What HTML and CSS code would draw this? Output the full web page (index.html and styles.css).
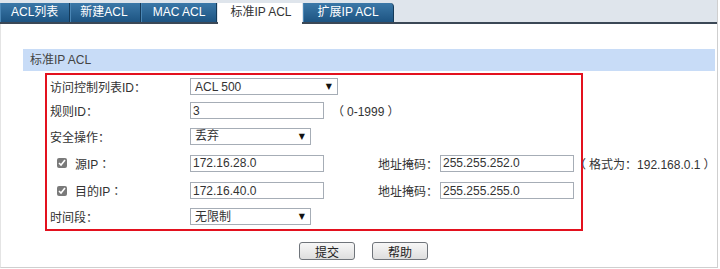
FILE: index.html
```html
<!DOCTYPE html>
<html lang="zh-CN">
<head>
    <meta charset="UTF-8">
    <meta name="viewport" content="width=device-width, initial-scale=1.0">
    <link rel="stylesheet" href="styles.css">
    <title>标准IP ACL</title>
</head>
<body>
    <div class="page">
        <ul class="tabs">
            <li class="tab">ACL列表</li>
            <li class="tab">新建ACL</li>
            <li class="tab">MAC ACL</li>
            <li class="tab active">标准IP ACL</li>
            <li class="tab">扩展IP ACL</li>
        </ul>

        <div class="content">
            <div class="panel-title">标准IP ACL</div>

            <form class="acl-form">
                <!-- ACL id -->
                <label class="label" for="aclId">访问控制列表ID<span class="punct">：</span></label>
                <div class="field span">
                    <span class="select-wrap">
                        <select id="aclId" class="select select-long">
                            <option>ACL 500</option>
                        </select>
                    </span>
                </div>

                <!-- rule id -->
                <label class="label" for="ruleId">规则ID<span class="punct">：</span></label>
                <div class="field span">
                    <input type="text" id="ruleId" class="text-input" value="3">
                    <span class="hint"><span class="punct open">（</span>0-1999<span class="punct close">）</span></span>
                </div>

                <!-- action -->
                <label class="label" for="action">安全操作<span class="punct">：</span></label>
                <div class="field span">
                    <span class="select-wrap">
                        <select id="action" class="select select-short">
                            <option>丢弃</option>
                        </select>
                    </span>
                </div>

                <!-- source ip -->
                <label class="label check" for="srcIp"><input type="checkbox" class="checkbox" checked>源IP<span class="punct">：</span></label>
                <div class="field">
                    <input type="text" id="srcIp" class="text-input" value="172.16.28.0">
                </div>
                <label class="mask-label" for="srcMask">地址掩码<span class="punct">：</span></label>
                <div class="field">
                    <input type="text" id="srcMask" class="text-input" value="255.255.252.0">
                </div>
                <span class="note"><span class="punct open">（</span>格式为<span class="punct">：</span>192.168.0.1<span class="punct close">）</span></span>

                <!-- destination ip -->
                <label class="label check" for="dstIp"><input type="checkbox" class="checkbox" checked>目的IP<span class="punct">：</span></label>
                <div class="field">
                    <input type="text" id="dstIp" class="text-input" value="172.16.40.0">
                </div>
                <label class="mask-label" for="dstMask">地址掩码<span class="punct">：</span></label>
                <div class="field span-rest">
                    <input type="text" id="dstMask" class="text-input" value="255.255.255.0">
                </div>

                <!-- time range -->
                <label class="label" for="timeRange">时间段<span class="punct">：</span></label>
                <div class="field span">
                    <span class="select-wrap">
                        <select id="timeRange" class="select select-short">
                            <option>无限制</option>
                        </select>
                    </span>
                </div>
            </form>

            <div class="actions">
                <button type="button" class="btn">提交</button>
                <button type="button" class="btn">帮助</button>
            </div>
        </div>
    </div>
</body>
</html>
```

FILE: styles.css
```css
body {
    margin: 0;
    padding: 0;
    background-color: #ffffff;
    font-family: "Liberation Sans", "Noto Sans CJK SC", Arial, sans-serif;
    font-size: 12px;
    color: #333333;
}

.page {
    width: 718px;
    height: 268px;
    box-sizing: border-box;
    border-left: 1px solid #e4e4e4;
    border-right: 1px solid #cfcfcf;
    border-bottom: 1px solid #cfcfcf;
    background-color: #ffffff;
}

/* Tab bar */
.tabs {
    display: flex;
    margin: 0 0 0 -1px;
    padding: 3px 0 0 0;
    list-style: none;
    background-color: #dfe5ec;
    border-bottom: 2px solid #3b4856;
}

.tab {
    height: 19px;
    line-height: 19px;
    padding: 0 11px;
    color: #ffffff;
    background: linear-gradient(#3b78a8, #1d5482);
    border-left: 1px solid #4a86b5;
    border-right: 1px solid #143a59;
    white-space: nowrap;
}

.tab:first-child {
    padding-left: 10px;
}

.tab:nth-child(2) {
    padding: 0 12px 0 9px;
}

.tab:last-child {
    padding: 0 14px;
    border-top-right-radius: 4px;
}

.tab.active {
    height: 21px;
    margin: 0 1px -2px 1px;
    padding: 0 10px 0 12px;
    color: #333333;
    background: #ffffff;
    border: 0;
}

/* Content */
.content {
    margin: 0 2px 0 22px;
    padding-top: 25px;
}

.panel-title {
    height: 22px;
    line-height: 22px;
    padding-left: 7px;
    background-color: #c8dcf7;
    color: #444444;
}

/* Form highlighted with red frame */
.acl-form {
    display: grid;
    grid-template-columns: 140px 188px 62px 133px minmax(0, 1fr);
    grid-template-rows: 23px 25px 26px 28px 27px 25px;
    align-items: center;
    width: 538px;
    height: 158px;
    box-sizing: border-box;
    margin: 2px 0 0 22px;
    padding-left: 3px;
    border: 2px solid #e3111e;
}

/* full-width punctuation centred in its box, like the original UI font */
.punct {
    font-family: "Noto Sans CJK TC", "Noto Sans CJK SC", sans-serif;
}

.punct.open {
    padding-right: 3px;
}

.punct.close {
    padding-left: 3px;
}

.label {
    white-space: nowrap;
}

.label.check {
    display: flex;
    align-items: center;
}

.checkbox {
    width: 10px;
    height: 10px;
    margin: 0 8px 0 7px;
    accent-color: #7a7a7a;
}

.field {
    display: flex;
    align-items: center;
}

.field.span {
    grid-column: 2 / -1;
}

.field.span-rest {
    grid-column: 4 / -1;
}

.mask-label {
    white-space: nowrap;
}

.note {
    padding-left: 1px;
    white-space: nowrap;
}

.hint {
    margin-left: 8px;
    white-space: nowrap;
}

.text-input {
    width: 134px;
    height: 17px;
    box-sizing: border-box;
    margin: 0;
    padding: 0 2px;
    border: 1px solid #a6adb6;
    font-family: inherit;
    font-size: 12px;
    color: #333333;
}

.select-wrap {
    position: relative;
    display: inline-flex;
}

.select-wrap::after {
    content: "▼";
    position: absolute;
    right: 6px;
    top: 4px;
    font-family: "DejaVu Sans", sans-serif;
    font-size: 8px;
    color: #111111;
    pointer-events: none;
}

.select {
    height: 17px;
    box-sizing: border-box;
    margin: 0;
    padding: 0 0 0 4px;
    border: 1px solid #a6adb6;
    background-color: #ffffff;
    font-family: inherit;
    font-size: 12px;
    color: #333333;
    appearance: none;
    -webkit-appearance: none;
    border-radius: 0;
}

.select-long {
    width: 148px;
}

.select-short {
    width: 121px;
}

/* Buttons */
.actions {
    display: flex;
    justify-content: center;
    gap: 17px;
    margin-top: 11px;
    padding-right: 11px;
}

.btn {
    width: 56px;
    height: 18px;
    padding: 0;
    border: 1px solid #6f747a;
    border-radius: 3px;
    background: linear-gradient(#f7f7f7, #dedede);
    font-family: inherit;
    font-size: 12px;
    color: #222222;
    cursor: pointer;
}

.btn:hover {
    background: linear-gradient(#ffffff, #e8e8e8);
}
```
